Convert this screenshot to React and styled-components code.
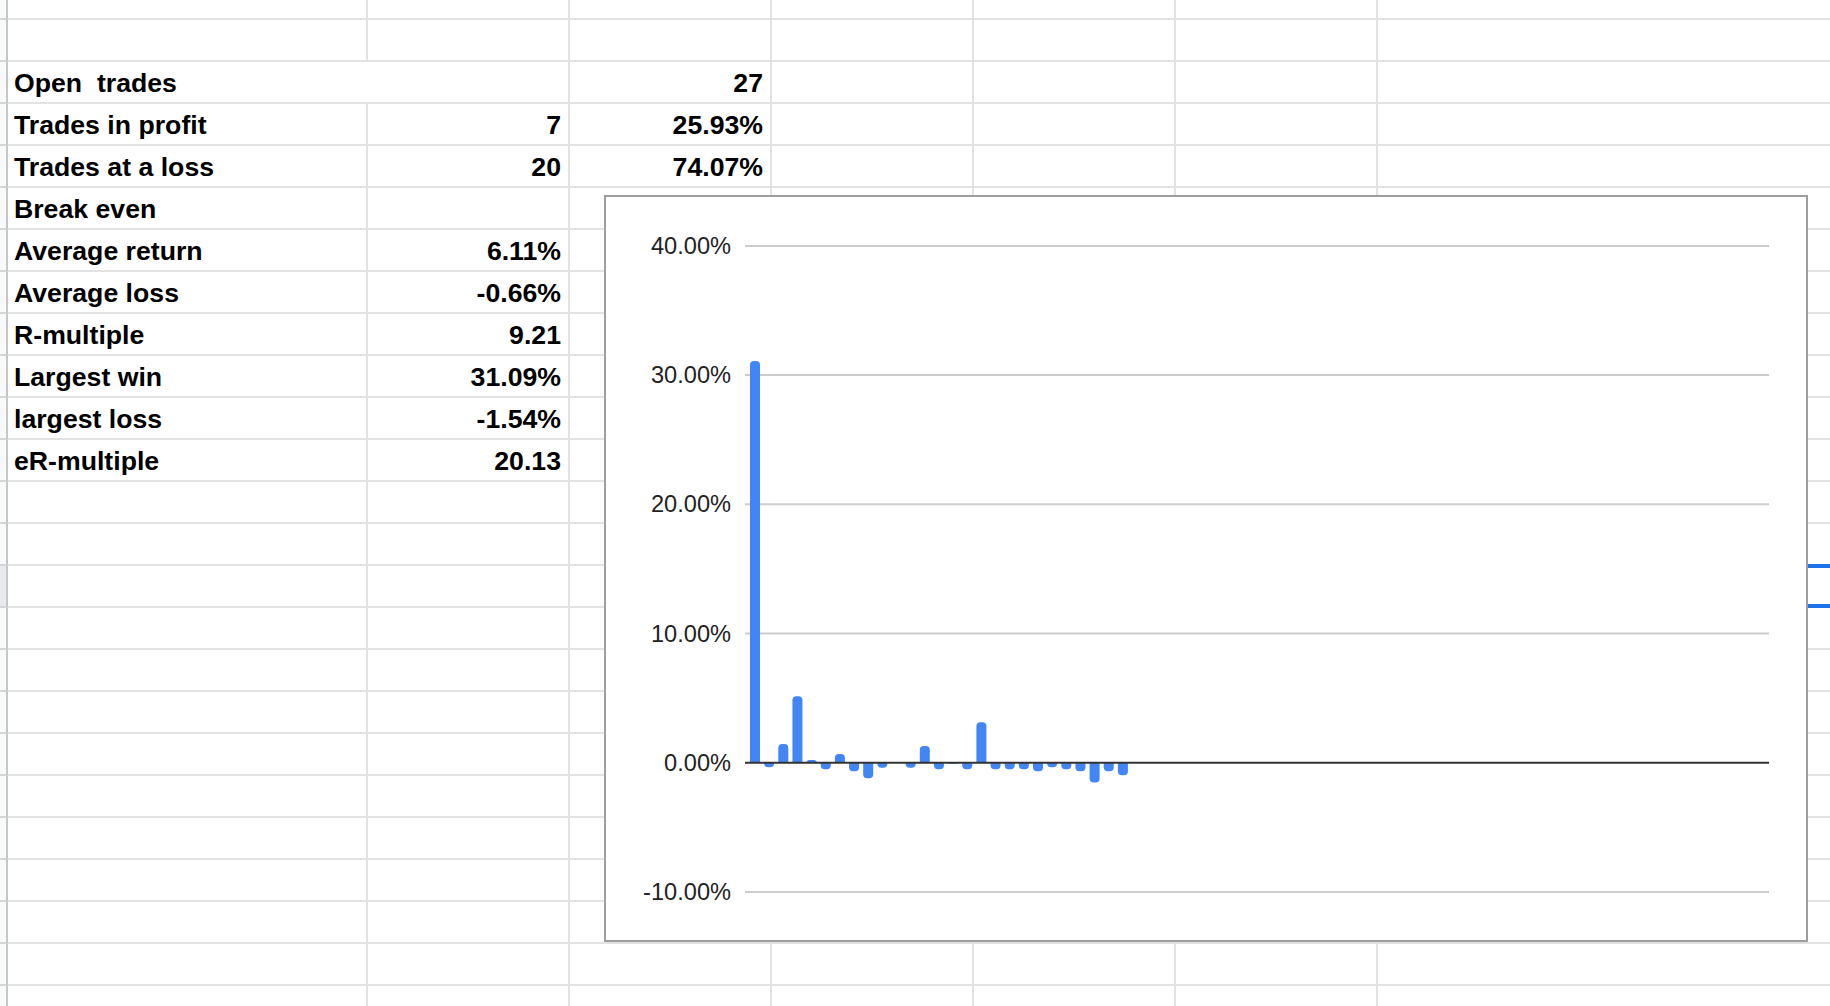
import React from "react";
import styled, { createGlobalStyle } from "styled-components";

const GlobalStyle = createGlobalStyle`
  html, body {
    margin: 0;
    padding: 0;
    background: #ffffff;
  }
  body {
    font-family: "Liberation Sans", Arial, sans-serif;
    overflow: hidden;
  }
`;

const COLS = "8px 360px 202px 202px 202px 202px 202px 1fr";

const Sheet = styled.div`
  position: relative;
  width: 1830px;
  height: 1006px;
  overflow: hidden;
  background: #ffffff;
`;

const Row = styled.div`
  display: grid;
  grid-template-columns: ${COLS};
  height: ${(p) => p.$h}px;
`;

const RowHeader = styled.div`
  box-sizing: border-box;
  background: ${(p) => (p.$active ? "#e8eaed" : "#f8f9fa")};
  border-right: 2px solid #c4c7c5;
  border-bottom: 2px solid #d3d5d7;
`;

const Cell = styled.div`
  box-sizing: border-box;
  grid-column: span ${(p) => p.$span || 1};
  display: flex;
  align-items: flex-end;
  justify-content: ${(p) => (p.$align === "right" ? "flex-end" : "flex-start")};
  padding: 0 7px 4px 6px;
  border-bottom: 2px solid #e2e2e2;
  border-right: ${(p) => (p.$last ? "none" : "2px solid #e2e2e2")};
  font-family: "Liberation Sans", Arial, sans-serif;
  font-weight: 700;
  font-size: 26.67px;
  line-height: 30px;
  color: #000000;
  white-space: pre;
  overflow: visible;
`;

const Selection = styled.div`
  position: absolute;
  left: 1374px;
  top: 564px;
  width: 520px;
  height: 44px;
  box-sizing: border-box;
  border: 4px solid #1a73e8;
  z-index: 1;
`;

const ChartFrame = styled.div`
  position: absolute;
  left: 604px;
  top: 195px;
  width: 1204px;
  height: 747px;
  box-sizing: border-box;
  border: 2px solid #9e9e9e;
  background: #ffffff;
  z-index: 2;
`;

const ChartSvg = styled.svg`
  display: block;
  width: 1200px;
  height: 743px;
`;

const AxisLabel = styled.text`
  font-family: "Liberation Sans", Arial, sans-serif;
  font-size: 23.6px;
  fill: #222222;
`;

const TOTAL_ROWS = 24;

const tableRows = [
  [],
  [
    { t: "Open  trades", span: 2 },
    { t: "27", align: "right" },
  ],
  [{ t: "Trades in profit" }, { t: "7", align: "right" }, { t: "25.93%", align: "right" }],
  [{ t: "Trades at a loss" }, { t: "20", align: "right" }, { t: "74.07%", align: "right" }],
  [{ t: "Break even" }],
  [{ t: "Average return" }, { t: "6.11%", align: "right" }],
  [{ t: "Average loss" }, { t: "-0.66%", align: "right" }],
  [{ t: "R-multiple" }, { t: "9.21", align: "right" }],
  [{ t: "Largest win" }, { t: "31.09%", align: "right" }],
  [{ t: "largest loss" }, { t: "-1.54%", align: "right" }],
  [{ t: "eR-multiple" }, { t: "20.13", align: "right" }],
];

function buildCells(defs) {
  // 7 data columns: A..G, first def may span 2
  const cells = [];
  let col = 0;
  defs.forEach((d, i) => {
    const span = d.span || 1;
    cells.push({ ...d, key: i, span, last: col + span === 7 });
    col += span;
  });
  let k = defs.length;
  while (col < 7) {
    cells.push({ t: "", key: k++, span: 1, last: col === 6 });
    col += 1;
  }
  return cells;
}

function SheetRow({ index, defs }) {
  const h = index === 0 ? 20 : 42;
  const cells = buildCells(defs || []);
  return (
    <Row $h={h}>
      <RowHeader $active={index === 14} />
      {cells.map((c) => (
        <Cell key={c.key} $span={c.span} $align={c.align} $last={c.last}>
          {c.t}
        </Cell>
      ))}
    </Row>
  );
}

// Chart geometry (svg coordinates = page - (606,197))
const ZERO_Y = 565.7;
const PX_PER_PCT = 12.92;
const PLOT_X0 = 139;
const PLOT_X1 = 1163;
const BAR_X0 = 144;
const BAR_STEP = 14.15;
const BAR_W = 10;

const values = [
  31.09, -0.36, 1.44, 5.15, 0.2, -0.5, 0.67, -0.67, -1.2, -0.39, 0, -0.39, 1.29,
  -0.5, -0.08, -0.5, 3.14, -0.5, -0.5, -0.5, -0.67, -0.36, -0.5, -0.67, -1.54,
  -0.67, -0.98,
];

function barPath(i, v) {
  const h = Math.abs(v) * PX_PER_PCT;
  if (h <= 0) return null;
  const x = BAR_X0 + i * BAR_STEP;
  const w = BAR_W;
  const r = Math.min(4, h, w / 2);
  if (v > 0) {
    const top = ZERO_Y - h;
    return `M${x},${ZERO_Y} V${top + r} A${r},${r} 0 0 1 ${x + r},${top} H${x + w - r} A${r},${r} 0 0 1 ${x + w},${top + r} V${ZERO_Y} Z`;
  }
  const bot = ZERO_Y + h;
  return `M${x},${ZERO_Y} V${bot - r} A${r},${r} 0 0 0 ${x + r},${bot} H${x + w - r} A${r},${r} 0 0 0 ${x + w},${bot - r} V${ZERO_Y} Z`;
}

const ticks = [40, 30, 20, 10, 0, -10];

function Chart() {
  return (
    <ChartFrame>
      <ChartSvg viewBox="0 0 1200 743">
        {ticks
          .filter((t) => t !== 0)
          .map((t) => {
            const y = ZERO_Y - t * PX_PER_PCT;
            return (
              <line key={`g${t}`} x1={PLOT_X0} x2={PLOT_X1} y1={y} y2={y} stroke="#cccccc" strokeWidth="2" />
            );
          })}
        {ticks.map((t) => {
          const y = ZERO_Y - t * PX_PER_PCT;
          return (
            <AxisLabel key={`l${t}`} x={125} y={y + 8} textAnchor="end">
              {`${t.toFixed(2)}%`}
            </AxisLabel>
          );
        })}
        {values.map((v, i) => {
          const d = barPath(i, v);
          return d ? <path key={`b${i}`} d={d} fill="#4285f4" /> : null;
        })}
        <line x1={PLOT_X0} x2={PLOT_X1} y1={ZERO_Y} y2={ZERO_Y} stroke="#333333" strokeWidth="2" />
      </ChartSvg>
    </ChartFrame>
  );
}

export default function App() {
  const rows = [];
  for (let i = 0; i <= TOTAL_ROWS; i++) {
    rows.push(<SheetRow key={i} index={i} defs={tableRows[i - 1] || []} />);
  }
  return (
    <>
      <GlobalStyle />
      <Sheet>
        {rows}
        <Selection />
        <Chart />
      </Sheet>
    </>
  );
}
